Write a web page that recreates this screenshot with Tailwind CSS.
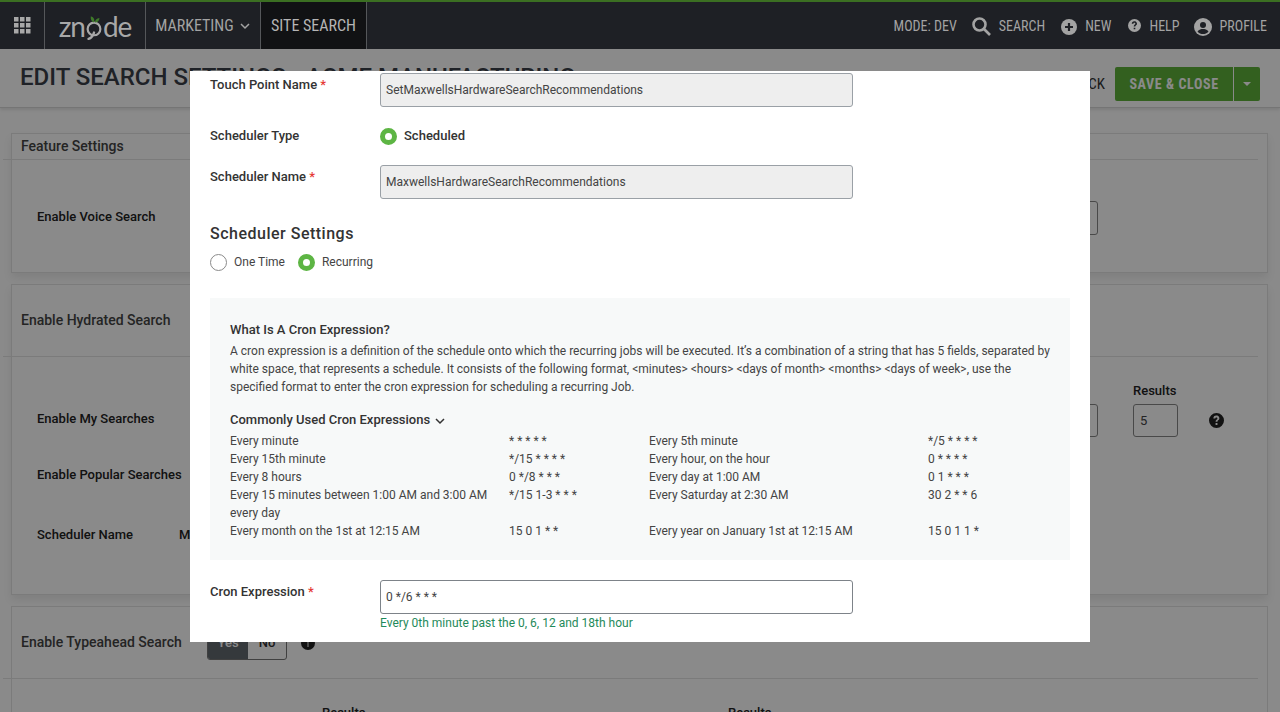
<!DOCTYPE html>
<html lang="en">

<head>
    <meta charset="UTF-8">
    <meta name="viewport" content="width=device-width, initial-scale=1.0">
    <title>Edit Search Settings</title>
    <script src="https://cdn.jsdelivr.net/npm/@tailwindcss/browser@4"></script>
</head>

<body class="relative h-[712px] w-[1280px] overflow-hidden bg-white font-['Roboto',sans-serif] text-[#222]">
    <!-- Top navigation -->
    <header class="relative z-20 flex h-[49px] items-stretch border-t-2 border-[#3b6f22] bg-[#1e2025] text-[#a3a3a3] font-['Roboto',sans-serif] [font-stretch:75%]">
        <div class="flex w-[45px] items-center justify-center border-r border-[#55575a]">
            <svg width="17" height="17" viewBox="0 0 17 17" fill="#a8a8a8">
                <rect x="0" y="0" width="4.5" height="4.5" /><rect x="6" y="0" width="4.5" height="4.5" /><rect x="12" y="0" width="4.5" height="4.5" />
                <rect x="0" y="6" width="4.5" height="4.5" /><rect x="6" y="6" width="4.5" height="4.5" /><rect x="12" y="6" width="4.5" height="4.5" />
                <rect x="0" y="12" width="4.5" height="4.5" /><rect x="6" y="12" width="4.5" height="4.5" /><rect x="12" y="12" width="4.5" height="4.5" />
            </svg>
        </div>
        <div class="flex w-[101px] items-center justify-center border-r border-[#55575a] font-['Lato',sans-serif] text-[28px] leading-none font-normal text-[#a8a8a8]">
            <span class="tracking-[-1px]">zn</span>
            <svg width="20" height="30" viewBox="0 0 22 30" fill="none" class="mt-[4px] -mx-[1px]">
                <circle cx="11" cy="16" r="7" stroke="#a8a8a8" stroke-width="2.4" />
                <path d="M5 27c3-1 5-4 6-7" stroke="#a8a8a8" stroke-width="2.6" stroke-linecap="round" />
                <path d="M11 9C8 8 7 5 7.500 2c3 1 4.500 3 3.500 7z" fill="#3f7a2a" />
                <path d="M12 9c0-3 2-4.500 5-5 0 3-2 5-5 5z" fill="#3f7a2a" />
            </svg>
            <span class="tracking-[-1px]">de</span>
        </div>
        <div class="flex w-[115px] items-center justify-center gap-[5px] border-r border-[#55575a] text-[16px]">
            MARKETING
            <svg width="12" height="12" viewBox="0 0 12 12" fill="none" stroke="#a3a3a3" stroke-width="1.500"><path d="M2 4l4 4 4-4" /></svg>
        </div>
        <div class="flex w-[106px] items-center justify-center border-r border-[#55575a] bg-[#111214] text-[16px] text-[#b5b5b5]">SITE SEARCH</div>
        <div class="ml-auto flex items-center pr-[13px] pt-[2px] text-[14px]">
            <span>MODE: DEV</span>
            <svg class="ml-[15px]" width="19" height="19" viewBox="0 0 19 19" fill="none" stroke="#a3a3a3" stroke-width="2.600"><circle cx="7.500" cy="7.500" r="6" /><path d="M12 12l6 6" /></svg>
            <span class="ml-[8px]">SEARCH</span>
            <svg class="ml-[16px]" width="16" height="16" viewBox="0 0 16 16"><circle cx="8" cy="8" r="8" fill="#a3a3a3" /><path d="M8 4v8M4 8h8" stroke="#1e2025" stroke-width="2.200" /></svg>
            <span class="ml-[8px]">NEW</span>
            <svg class="mb-[2px] ml-[17px]" width="13" height="13" viewBox="0 0 24 24"><path fill="#a3a3a3" d="M12 0a12 12 0 1 0 0 24 12 12 0 0 0 0-24zm1.500 19h-3v-3h3v3zm2.600-8.500c-.8 1-2.600 1.500-2.600 3.500h-3c0-3.200 2.900-3.600 3-5.200.1-1-.7-1.800-1.700-1.800-1 0-1.800.8-1.800 1.800h-3A4.800 4.800 0 0 1 12 4c3.200 0 5.800 3.500 4.100 6.500z" /></svg>
            <span class="ml-[8px]">HELP</span>
            <svg class="ml-[14px]" width="18" height="18" viewBox="0 0 18 18"><circle cx="9" cy="9" r="9" fill="#a3a3a3" /><circle cx="9" cy="7" r="3" fill="#1e2025" /><path d="M3.500 13.500C5 11.500 7 11 9 11s4 .5 5.500 2.500C13 15.500 11 16 9 16s-4-.5-5.500-2.500z" fill="#1e2025" /></svg>
            <span class="ml-[8px]">PROFILE</span>
        </div>
    </header>

    <!-- Page under the dialog -->
    <div class="flex h-[59px] items-center justify-between border-b border-[#d8d8d8] pl-[20px] pr-[20px] shadow-[0_2px_3px_rgba(0,0,0,0.1)]">
        <h1 class="-mt-[3px] text-[24px] font-medium text-[#3a4048]">EDIT SEARCH SETTINGS - ACME MANUFACTURING</h1>
        <div class="mt-[12px] flex items-center [font-stretch:75%]">
            <span class="mr-[10px] text-[15px] text-[#333]">BACK</span>
            <div class="flex h-[34px] rounded-[2px] bg-[#5fb13a] text-white">
                <span class="flex w-[119px] items-center justify-center border-r border-white text-[14px] font-bold tracking-[0.6px]">SAVE &amp; CLOSE</span>
                <span class="flex w-[26px] items-center justify-center">
                    <span class="h-0 w-0 border-x-[4px] border-t-[4px] border-x-transparent border-t-white"></span>
                </span>
            </div>
        </div>
    </div>

    <main class="flex flex-col gap-[11px] pl-[11px] pr-[12px] pt-[25px]">
        <section class="h-[140px] border border-[#e4e4e4] shadow-[0_5px_8px_rgba(0,0,0,0.08)]">
            <div class="flex h-[25px] items-center pl-[9px] text-[14px] font-medium text-[#444]">Feature Settings</div>
            <div class="-ml-[9px] mr-[9px] border-t border-[#e4e4e4]"></div>
            <div class="flex h-[112px] items-center justify-between pl-[25px] pr-[169px] pt-[2px] text-[13px] font-medium">
                <span class="-mt-[1px]">Enable Voice Search</span>
                <span class="mt-[2px] h-[34px] w-[100px] rounded-[3px] border border-[#888]"></span>
            </div>
        </section>

        <section class="h-[311px] border border-[#e4e4e4] shadow-[0_5px_8px_rgba(0,0,0,0.08)]">
            <div class="flex h-[71px] items-center pl-[9px] text-[14px] font-medium text-[#444]">Enable Hydrated Search</div>
            <div class="-ml-[9px] mr-[9px] border-t border-[#e4e4e4]"></div>
            <div class="flex flex-col pl-[25px] text-[13px] font-medium">
                <div class="mt-[47px] flex h-[33px] items-center justify-between">
                    <span class="mb-[4px]">Enable My Searches</span>
                    <div class="flex items-center">
                        <span class="h-[33px] w-[100px] rounded-[3px] border border-[#888]"></span>
                        <div class="relative ml-[35px]">
                            <span class="absolute -top-[23px] left-0 text-[13px]">Results</span>
                            <span class="flex h-[33px] w-[45px] items-center rounded-[3px] border border-[#888] pl-[6px] font-normal text-[#444]">5</span>
                        </div>
                        <svg class="ml-[31px] mr-[43px]" width="15" height="15" viewBox="0 0 24 24"><path fill="#222" d="M12 0a12 12 0 1 0 0 24 12 12 0 0 0 0-24zm1.500 19h-3v-3h3v3zm2.600-8.500c-.8 1-2.600 1.500-2.600 3.500h-3c0-3.200 2.900-3.600 3-5.200.1-1-.7-1.800-1.700-1.800-1 0-1.800.8-1.800 1.800h-3A4.800 4.800 0 0 1 12 4c3.200 0 5.800 3.500 4.100 6.500z" /></svg>
                    </div>
                </div>
                <div class="mt-[28px]">Enable Popular Searches</div>
                <div class="mt-[40px] flex"><span class="w-[142px]">Scheduler Name</span><span>MaxwellsHardware</span></div>
            </div>
        </section>

        <section class="border border-[#e4e4e4]">
            <div class="flex h-[71px] items-center pl-[9px] text-[14px] font-medium text-[#444]">
                <span class="w-[186px]">Enable Typeahead Search</span>
                <div class="flex h-[34px] w-[80px] overflow-hidden rounded-[3px] border border-[#777] text-[13px]">
                    <span class="flex w-[40px] items-center justify-center bg-[#63696f] text-white">Yes</span>
                    <span class="flex flex-1 items-center justify-center text-[#333]">No</span>
                </div>
                <svg class="ml-[14px]" width="14" height="14" viewBox="0 0 14 14"><circle cx="7" cy="7" r="7" fill="#222" /><rect x="6" y="6" width="2" height="5" fill="#8a8a8a" /><rect x="6" y="3" width="2" height="2" fill="#8a8a8a" /></svg>
            </div>
            <div class="-ml-[9px] mr-[9px] border-t border-[#e4e4e4]"></div>
            <div class="flex pl-[310px] pt-[24px] text-[13px] font-medium">
                <span class="w-[406px]">Results</span>
                <span>Results</span>
            </div>
        </section>
    </main>

    <!-- Dim layer -->
    <div class="absolute inset-0 z-10 bg-black/46"></div>

    <!-- Dialog -->
    <div class="absolute left-[190px] top-[71px] z-20 h-[571px] w-[900px] overflow-hidden bg-white px-[20px] pt-[2px] text-[13px] text-[#333]">
        <div class="flex h-[34px]">
            <label class="w-[170px] pt-[2px] font-medium">Touch Point Name <span class="text-[#e53935]">*</span></label>
            <input value="SetMaxwellsHardwareSearchRecommendations" disabled class="h-[34px] w-[473px] rounded-[3px] border border-[#9aa0a6] bg-[#eeeeee] px-[5px] text-[12px] text-[#444]">
        </div>
        <div class="mt-[20px] flex h-[18px] items-center">
            <span class="w-[170px] font-medium">Scheduler Type</span>
            <span class="h-[17px] w-[17px] rounded-full border-[5px] border-[#5db544] bg-white"></span>
            <span class="ml-[7px] font-medium">Scheduled</span>
        </div>
        <div class="mt-[20px] flex h-[34px]">
            <label class="w-[170px] pt-[2px] font-medium">Scheduler Name <span class="text-[#e53935]">*</span></label>
            <input value="MaxwellsHardwareSearchRecommendations" disabled class="h-[34px] w-[473px] rounded-[3px] border border-[#9aa0a6] bg-[#eeeeee] px-[5px] text-[12px] text-[#444]">
        </div>
        <h2 class="mt-[25px] text-[16px] font-medium leading-[20px] tracking-[0.5px]">Scheduler Settings</h2>
        <div class="mt-[9px] flex h-[18px] items-center text-[12px] text-[#444]">
            <span class="h-[17px] w-[17px] rounded-full border border-[#8a8a8a] bg-white"></span>
            <span class="ml-[7px]">One Time</span>
            <span class="ml-[13px] h-[17px] w-[17px] rounded-full border-[5px] border-[#5db544] bg-white"></span>
            <span class="ml-[7px]">Recurring</span>
        </div>

        <div class="mt-[27px] h-[262px] bg-[#f7f9f9] px-[20px] pt-[23px] text-[12px] leading-[18px] text-[#444]">
            <h3 class="text-[13px] font-medium text-[#333]">What Is A Cron Expression?</h3>
            <p class="mt-[3px]">A cron expression is a definition of the schedule onto which the recurring jobs will be executed. It’s a combination of a string that has 5 fields, separated by white space, that represents a schedule. It consists of the following format, &lt;minutes&gt; &lt;hours&gt; &lt;days of month&gt; &lt;months&gt; &lt;days of week&gt;, use the specified format to enter the cron expression for scheduling a recurring Job.</p>
            <div class="mt-[15px] flex items-center gap-[4px] text-[13px] font-medium text-[#333]">
                Commonly Used Cron Expressions
                <svg width="12" height="12" viewBox="0 0 12 12" fill="none" stroke="#333" stroke-width="1.500" class="mt-[2px]"><path d="M2 4l4 4 4-4" /></svg>
            </div>
            <div class="mt-[3px] grid grid-cols-[279px_140px_279px_1fr]">
                <span>Every minute</span><span>* * * * *</span><span>Every 5th minute</span><span>*/5 * * * *</span>
                <span>Every 15th minute</span><span>*/15 * * * *</span><span>Every hour, on the hour</span><span>0 * * * *</span>
                <span>Every 8 hours</span><span>0 */8 * * *</span><span>Every day at 1:00 AM</span><span>0 1 * * *</span>
                <span class="pr-[20px]">Every 15 minutes between 1:00 AM and 3:00 AM every day</span><span>*/15 1-3 * * *</span><span>Every Saturday at 2:30 AM</span><span>30 2 * * 6</span>
                <span>Every month on the 1st at 12:15 AM</span><span>15 0 1 * *</span><span>Every year on January 1st at 12:15 AM</span><span>15 0 1 1 *</span>
            </div>
        </div>

        <div class="mt-[20px] flex">
            <label class="w-[170px] pt-[2px] font-medium">Cron Expression <span class="text-[#e53935]">*</span></label>
            <div>
                <input value="0 */6 * * *" class="block h-[34px] w-[473px] rounded-[3px] border border-[#7d8389] bg-white px-[5px] text-[12px] text-[#444]">
                <p class="mt-[1px] text-[12px] leading-[16px] text-[#1f8a5b]">Every 0th minute past the 0, 6, 12 and 18th hour</p>
            </div>
        </div>
    </div>
</body>

</html>
